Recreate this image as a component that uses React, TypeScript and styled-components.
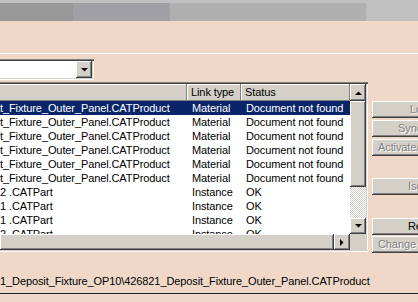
import React from 'react';
import styled, { createGlobalStyle, css } from 'styled-components';

const face = '#d4d0c8';
const shadow = '#808080';
const dark = '#404040';
const pink = '#f0d8c8';

const GlobalStyle = createGlobalStyle`
  html, body {
    margin: 0;
    padding: 0;
    background: ${pink};
  }
  body {
    font-family: "Liberation Sans", Arial, sans-serif;
    font-size: 11px;
    letter-spacing: -0.1px;
    color: #000;
  }
`;

const raised = css`
  background: ${face};
  box-shadow: inset -1px -1px ${dark}, inset 1px 1px #fff, inset -2px -2px ${shadow}, inset 2px 2px ${face};
`;

const Window = styled.div`
  width: 418px;
  height: 302px;
  overflow: hidden;
  background: ${pink};
  display: flex;
  flex-direction: column;
`;

const TitleStrip = styled.div`
  display: flex;
  flex: none;
  height: 18px;
  border-top: 3px solid #c0c0c0;
`;

const StripSegment = styled.div<{ $w?: number; $c: string }>`
  background: ${p => p.$c};
  ${p => (p.$w ? css`width: ${p.$w}px; flex: none;` : css`flex: 1;`)}
`;

const Body = styled.div`
  flex: 1;
  display: flex;
  flex-direction: column;
  padding-top: 32px;
`;

const Groove = styled.div`
  height: 1px;
  background: #fff;
`;

const Combo = styled.div`
  margin-top: 5px;
  width: 92px;
  height: 17px;
  padding: 2px 2px 2px 0;
  display: flex;
  background: #fff;
  box-shadow: inset 0 1px ${shadow}, inset 0 2px ${dark}, inset 0 -1px #fff, inset 0 -2px ${face},
    inset -1px 0 #fff, inset -2px 0 ${face};
`;

const ComboField = styled.div`
  flex: 1;
  background: #fff;
`;

const ArrowButton = styled.div<{ $h?: number; $w?: number }>`
  ${raised};
  flex: none;
  width: ${p => p.$w ?? 16}px;
  height: ${p => p.$h ?? 16}px;
  display: flex;
  align-items: center;
  justify-content: center;
`;

const MainRow = styled.div`
  margin-top: 2px;
  display: flex;
  align-items: flex-start;
  gap: 4px;
`;

const ListFrame = styled.div`
  padding: 2px 2px 2px 0;
  box-shadow: inset 0 1px ${shadow}, inset 0 2px ${dark}, inset 0 -1px #fff, inset 0 -2px ${face},
    inset -1px 0 #fff, inset -2px 0 ${face};
  background: ${face};
`;

const ListGrid = styled.div`
  display: grid;
  grid-template-columns: 350px 16px;
  grid-template-rows: 150px 16px;
`;

const ListView = styled.div`
  background: #fff;
  overflow: hidden;
`;

const Columns = styled.div`
  display: grid;
  grid-template-columns: 187px 54px 109px;
`;

const HeaderCell = styled.div<{ $first?: boolean }>`
  height: 17px;
  line-height: 16px;
  padding-left: ${p => (p.$first ? 0 : 4)}px;
  background: ${face};
  box-shadow: inset -1px -1px ${shadow}, inset ${p => (p.$first ? 0 : 1)}px 1px #fff;
  white-space: nowrap;
  overflow: hidden;
`;

const Row = styled.div<{ $selected?: boolean }>`
  display: grid;
  grid-template-columns: 187px 54px 109px;
  height: 14px;
  line-height: 14px;
  white-space: nowrap;
  background: ${p => (p.$selected ? '#0a246a' : 'transparent')};
  color: ${p => (p.$selected ? '#fff' : '#000')};
`;

const Cell = styled.div<{ $first?: boolean }>`
  padding-left: ${p => (p.$first ? 0 : 5)}px;
  overflow: hidden;
`;

const VScroll = styled.div`
  display: flex;
  flex-direction: column;
`;

const HScroll = styled.div`
  display: flex;
`;

const Thumb = styled.div<{ $size?: number }>`
  ${raised};
  ${p => (p.$size ? css`height: ${p.$size}px; flex: none;` : css`flex: 1;`)}
`;

const Track = styled.div`
  flex: 1;
  background: repeating-conic-gradient(${face} 0 25%, #fff 0 50%) 0 0 / 2px 2px;
`;

const Corner = styled.div`
  background: ${face};
`;

const ButtonColumn = styled.div`
  display: flex;
  flex-direction: column;
  padding-top: 19px;
`;

const PushButton = styled.div<{ $disabled?: boolean; $indent: number; $gap?: number }>`
  ${raised};
  width: 96px;
  height: 17px;
  line-height: 16px;
  margin-top: ${p => p.$gap ?? 0}px;
  padding-left: ${p => p.$indent}px;
  box-sizing: border-box;
  white-space: nowrap;
  color: ${p => (p.$disabled ? shadow : '#000')};
  text-shadow: ${p => (p.$disabled ? '1px 1px 0 #fff' : 'none')};
`;

const PathText = styled.div`
  margin-top: 22px;
  height: 13px;
  line-height: 13px;
  white-space: nowrap;
`;

const BottomRule = styled.div`
  margin-top: 5px;
  height: 1px;
  background: #202020;
`;

type Dir = 'up' | 'down' | 'right';

const Arrow: React.FC<{ dir: Dir }> = ({ dir }) => {
  const pts = {
    up: '0,4 7,4 3.5,0.5',
    down: '0,0 7,0 3.5,3.5',
    right: '0,0 0,7 3.5,3.5',
  }[dir];
  const w = dir === 'right' ? 4 : 7;
  const h = dir === 'right' ? 7 : 4;
  return (
    <svg width={w} height={h} viewBox={`0 0 ${w} ${h}`}>
      <polygon points={pts} fill="#000" />
    </svg>
  );
};

const rows = [
  ...Array.from({ length: 6 }, () => ({
    name: 't_Fixture_Outer_Panel.CATProduct',
    type: 'Material',
    status: 'Document not found',
  })),
  { name: '2 .CATPart', type: 'Instance', status: 'OK' },
  { name: '1 .CATPart', type: 'Instance', status: 'OK' },
  { name: '1 .CATPart', type: 'Instance', status: 'OK' },
  { name: '2 .CATPart', type: 'Instance', status: 'OK' },
];

const buttons = [
  { label: 'Load', indent: 38, disabled: true, gap: 0 },
  { label: 'Synchronize', indent: 26, disabled: true, gap: 2 },
  { label: 'Activate/Deactivate', indent: 6, disabled: true, gap: 2 },
  { label: 'Isolate', indent: 36, disabled: true, gap: 22 },
  { label: 'Replace', indent: 36, disabled: false, gap: 23 },
  { label: 'Change Source...', indent: 6, disabled: true, gap: 1 },
];

export default function App() {
  return (
    <>
      <GlobalStyle />
      <Window>
        <TitleStrip>
          <StripSegment $w={73} $c="#989898" />
          <StripSegment $w={97} $c="#a0a0a4" />
          <StripSegment $w={196} $c="#b0b0b0" />
          <StripSegment $c="#c0c0c0" />
        </TitleStrip>
        <Body>
          <Groove />
          <Combo>
            <ComboField />
            <ArrowButton $h={17}>
              <Arrow dir="down" />
            </ArrowButton>
          </Combo>
          <MainRow>
            <ListFrame>
              <ListGrid>
                <ListView>
                  <Columns>
                    <HeaderCell $first />
                    <HeaderCell>Link type</HeaderCell>
                    <HeaderCell>Status</HeaderCell>
                  </Columns>
                  {rows.map((r, i) => (
                    <Row key={i} $selected={i === 0}>
                      <Cell $first>{r.name}</Cell>
                      <Cell>{r.type}</Cell>
                      <Cell>{r.status}</Cell>
                    </Row>
                  ))}
                </ListView>
                <VScroll>
                  <ArrowButton $h={17}>
                    <Arrow dir="up" />
                  </ArrowButton>
                  <Thumb $size={86} />
                  <Track />
                  <ArrowButton>
                    <Arrow dir="down" />
                  </ArrowButton>
                </VScroll>
                <HScroll>
                  <Thumb />
                  <ArrowButton>
                    <Arrow dir="right" />
                  </ArrowButton>
                </HScroll>
                <Corner />
              </ListGrid>
            </ListFrame>
            <ButtonColumn>
              {buttons.map(b => (
                <PushButton key={b.label} $disabled={b.disabled} $indent={b.indent} $gap={b.gap}>
                  {b.label}
                </PushButton>
              ))}
            </ButtonColumn>
          </MainRow>
          <PathText>1_Deposit_Fixture_OP10\426821_Deposit_Fixture_Outer_Panel.CATProduct</PathText>
          <BottomRule />
        </Body>
      </Window>
    </>
  );
}
